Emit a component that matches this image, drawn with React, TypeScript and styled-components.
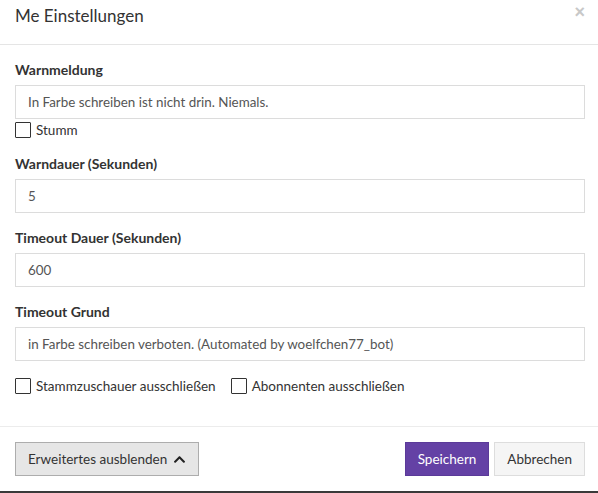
import React from "react";
import styled, { createGlobalStyle } from "styled-components";
import { FaChevronUp } from "react-icons/fa";

const GlobalStyle = createGlobalStyle`
  html, body {
    margin: 0;
    padding: 0;
    background: #3a3a3a;
    overflow: hidden;
  }
  * { box-sizing: border-box; }
`;

const Modal = styled.div`
  width: 600px;
  height: 491px;
  background: #fff;
  font-family: "Lato", "Liberation Sans", sans-serif;
  color: #333;
  display: flex;
  flex-direction: column;
`;

const Header = styled.div`
  height: 45px;
  padding: 0 15px;
  border-bottom: 1px solid #e5e5e5;
  display: flex;
  align-items: center;
  justify-content: space-between;
`;

const Title = styled.h4`
  margin: 0;
  font-size: 17px;
  font-weight: 400;
  line-height: 20px;
  margin-top: -12px;
`;

const Close = styled.button`
  border: 0;
  background: none;
  padding: 0;
  font-family: "Liberation Sans", sans-serif;
  font-size: 18px;
  font-weight: 700;
  color: #c8c8c8;
  line-height: 1;
  margin-top: -20px;
  cursor: pointer;
`;

const Body = styled.div`
  padding: 15px 15px 0;
  flex: 1;
`;

const Group = styled.div<{ $gap?: number }>`
  margin-bottom: ${(p) => p.$gap ?? 15}px;
`;

const Label = styled.label`
  display: block;
  font-size: 14px;
  font-weight: 700;
  line-height: 20px;
  margin-bottom: 5px;
`;

const Input = styled.div`
  height: 34px;
  border: 1px solid #dcdcdc;
  padding: 0 12px;
  display: flex;
  align-items: center;
  font-size: 13.4px;
  color: #555;
`;

const CheckRow = styled.div<{ $top?: number; $bottom?: number }>`
  display: flex;
  align-items: center;
  gap: 15px;
  margin-top: ${(p) => p.$top ?? 0}px;
  margin-bottom: ${(p) => p.$bottom ?? 0}px;
  height: 20px;
`;

const Check = styled.label`
  display: flex;
  align-items: center;
  gap: 5px;
  font-size: 13.5px;
  line-height: 20px;
`;

const Box = styled.span`
  width: 16px;
  height: 16px;
  border: 1px solid #333;
  border-radius: 1px;
  background: #fff;
`;

const Footer = styled.div`
  border-top: 1px solid #ececec;
  padding: 15px;
  display: flex;
  align-items: center;
  gap: 5px;
`;

const Button = styled.button<{ $variant?: "primary" | "default" | "muted" }>`
  height: 34px;
  padding: 0 12px;
  font-family: inherit;
  font-size: 13.5px;
  border: 1px solid
    ${(p) =>
      p.$variant === "primary" ? "#5b3a99" : p.$variant === "muted" ? "#adadad" : "#ddd"};
  background: ${(p) =>
    p.$variant === "primary" ? "#6441a5" : p.$variant === "muted" ? "#e6e6e6" : "#f5f5f5"};
  color: ${(p) => (p.$variant === "primary" ? "#fff" : "#333")};
  display: flex;
  align-items: center;
  gap: 6px;
  cursor: pointer;

  svg {
    color: #222;
  }
`;

const Spacer = styled.div`
  flex: 1;
`;

export default function App() {
  return (
    <>
      <GlobalStyle />
      <Modal>
        <Header>
          <Title>Me Einstellungen</Title>
          <Close>×</Close>
        </Header>
        <Body>
          <Group $gap={0}>
            <Label>Warnmeldung</Label>
            <Input>In Farbe schreiben ist nicht drin. Niemals.</Input>
          </Group>
          <CheckRow $top={1} $bottom={14}>
            <Check>
              <Box />
              Stumm
            </Check>
          </CheckRow>
          <Group>
            <Label>Warndauer (Sekunden)</Label>
            <Input>5</Input>
          </Group>
          <Group>
            <Label>Timeout Dauer (Sekunden)</Label>
            <Input>600</Input>
          </Group>
          <Group>
            <Label>Timeout Grund</Label>
            <Input>in Farbe schreiben verboten. (Automated by woelfchen77_bot)</Input>
          </Group>
          <CheckRow $top={1}>
            <Check>
              <Box />
              Stammzuschauer ausschließen
            </Check>
            <Check>
              <Box />
              Abonnenten ausschließen
            </Check>
          </CheckRow>
        </Body>
        <Footer>
          <Button $variant="muted">
            Erweitertes ausblenden <FaChevronUp size={13} />
          </Button>
          <Spacer />
          <Button $variant="primary">Speichern</Button>
          <Button>Abbrechen</Button>
        </Footer>
      </Modal>
    </>
  );
}
